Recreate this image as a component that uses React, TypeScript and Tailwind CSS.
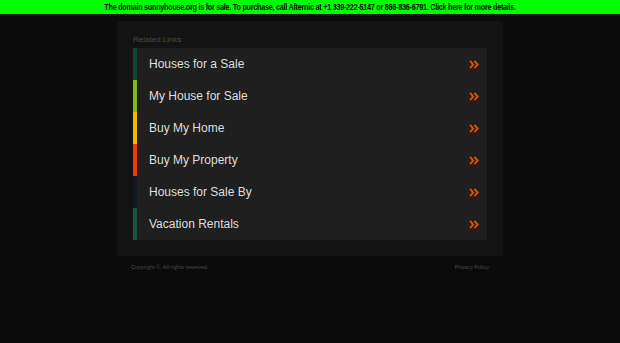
import React from 'react';

interface LinkItem {
  label: string;
  bar: string;
}

const links: LinkItem[] = [
  { label: 'Houses for a Sale', bar: 'bg-[#0b4a30]' },
  { label: 'My House for Sale', bar: 'bg-[#86b80f]' },
  { label: 'Buy My Home', bar: 'bg-[#f5b400]' },
  { label: 'Buy My Property', bar: 'bg-[#f03c00]' },
  { label: 'Houses for Sale By', bar: 'bg-[#0c1a24]' },
  { label: 'Vacation Rentals', bar: 'bg-[#14573a]' },
];

const Chevrons: React.FC = () => (
  <svg width="10" height="9" viewBox="0 0 10 9" fill="none">
    <path d="M1 0.8 L4.2 4.5 L1 8.2 M5.4 0.8 L8.6 4.5 L5.4 8.2" stroke="#cf4f05" strokeWidth="2" strokeLinejoin="miter" />
  </svg>
);

const App: React.FC = () => {
  return (
    <div className="min-h-[343px] bg-[#0b0b0b] font-['Liberation_Sans',Arial,sans-serif]">
      {/* Sale banner */}
      <div className="h-[16px] bg-[#00ff00] border-b-2 border-[#1a1a1a] flex items-center justify-center overflow-hidden">
        <a href="#" className="inline-block whitespace-nowrap text-[8.5px] font-bold text-black tracking-[-0.3px] leading-none scale-x-[0.85]">
          The domain sunnyhouse.org is for sale. To purchase, call Afternic at +1 339-222-5147 or 866-836-6791. Click here for more details.
        </a>
      </div>

      {/* Main box */}
      <div className="w-[386px] mx-auto mt-[5px] bg-[#131313] rounded-t-[4px] px-[16px] pt-[15px] pb-[16px]">
        <div className="text-[8px] text-[#4a4a4a] leading-none mb-[4px]">Related Links</div>
        <div className="flex flex-col">
          {links.map((link) => (
            <a key={link.label} href="#" className="flex h-[32px] bg-[#1f1f1f] items-stretch">
              <span className={`w-[4px] ${link.bar}`} />
              <span className="flex-1 flex items-center pl-[12px] text-[12px] text-[#dedede]">
                {link.label}
              </span>
              <span className="flex items-center pr-[8px]">
                <Chevrons />
              </span>
            </a>
          ))}
        </div>
      </div>

      {/* Footer */}
      <div className="w-[358px] mx-auto mt-[7px] flex justify-between text-[5.5px] text-[#4a4a4a]">
        <span>Copyright ©. All rights reserved.</span>
        <span>Privacy Policy</span>
      </div>
    </div>
  );
};

export default App;
